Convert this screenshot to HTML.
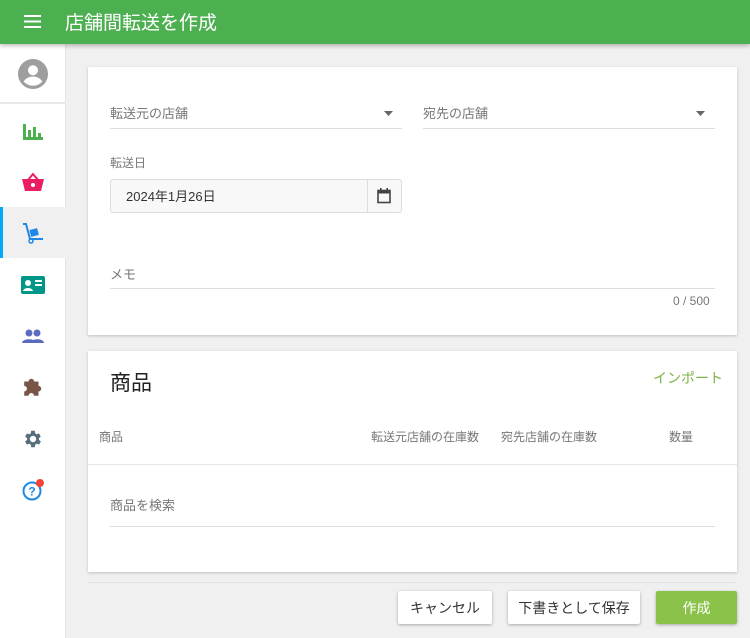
<!DOCTYPE html>
<html><head><meta charset="utf-8"><style>
*{box-sizing:border-box;margin:0;padding:0}
body{width:750px;height:638px;overflow:hidden;background:#f0f0f0;font-family:"Liberation Sans","Noto Sans CJK JP",sans-serif;position:relative;color:#333}
.hdr{position:absolute;left:0;top:0;width:750px;height:44px;background:#4caf50;box-shadow:0 2px 4px rgba(0,0,0,.25);z-index:3;color:#fff}
.hdr .t{position:absolute;left:65px;top:8px;font-size:19px}
.side{position:absolute;left:0;top:44px;width:66px;height:594px;background:#fff;border-right:1px solid #e4e4e4}
.ic{position:absolute;left:0;width:66px;height:51px;display:flex;align-items:center;justify-content:center}
.card{position:absolute;background:#fff;box-shadow:0 1px 3px rgba(0,0,0,.2)}
.lbl{position:absolute;font-size:13px;color:#777}
.line{position:absolute;height:1px;background:#ddd}
.btn{position:absolute;top:591px;height:33px;background:#fff;box-shadow:0 1px 3px rgba(0,0,0,.3);font-size:14px;display:flex;align-items:center;justify-content:center;border-radius:2px;color:#333}
</style></head><body>
<div class="hdr">
<svg style="position:absolute;left:24px;top:15px" width="17" height="13"><rect y="0" width="17" height="2" fill="#fff"/><rect y="5.5" width="17" height="2" fill="#fff"/><rect y="11" width="17" height="2" fill="#fff"/></svg>
<div class="t">店舗間転送を作成</div></div>
<div class="side">
<div class="ic" style="top:4px;height:51px"><svg width="30" height="30" viewBox="0 0 24 24"><circle cx="12" cy="12" r="12" fill="#9e9e9e"/><circle cx="12" cy="9" r="4" fill="#fff"/><path d="M4.5 18c2-3 5-4 7.5-4s5.5 1 7.5 4c-2 2.2-4.6 3.4-7.5 3.4S6.5 20.2 4.5 18z" fill="#fff"/></svg></div>
<div style="position:absolute;left:0;top:58px;width:66px;height:2px;background:#e8e8e8"></div>
<div class="ic" style="top:61px"><svg width="20" height="18"><rect x="0" y="2" width="3" height="16" fill="#4caf50"/><rect x="5" y="8" width="3" height="10" fill="#4caf50"/><rect x="10" y="5" width="3" height="13" fill="#4caf50"/><rect x="15" y="11" width="3" height="7" fill="#4caf50"/><rect x="0" y="15" width="20" height="3" fill="#4caf50"/></svg></div>
<div class="ic" style="top:112px"><svg width="22" height="20" viewBox="0 0 22 20"><path d="M6 8L11 2L16 8" stroke="#e91e63" stroke-width="2" fill="none"/><path d="M0 7h22l-3 12H3z" fill="#e91e63"/><circle cx="11" cy="13" r="2" fill="#fff"/></svg></div>
<div class="ic" style="top:163px;background:#f0f0f0"><div style="position:absolute;left:0;top:0;width:3px;height:51px;background:#03a9f4"></div><svg width="22" height="22" viewBox="0 0 22 22"><path d="M1 2h3l4 15h13" stroke="#1e88e5" stroke-width="2" fill="none"/><rect x="8" y="7" width="8" height="7" fill="#1e88e5" transform="rotate(-15 12 10)"/><circle cx="9" cy="19" r="2" fill="none" stroke="#1e88e5" stroke-width="1.5"/></svg></div>
<div class="ic" style="top:215px"><svg width="24" height="18"><rect width="24" height="18" rx="2" fill="#009688"/><circle cx="7" cy="7" r="3" fill="#fff"/><path d="M2 15c1-4 9-4 10 0z" fill="#fff"/><rect x="14" y="4" width="7" height="2" fill="#fff"/><rect x="14" y="8" width="7" height="2" fill="#fff"/></svg></div>
<div class="ic" style="top:266px"><svg width="22" height="14"><circle cx="7" cy="4" r="3.5" fill="#5c6bc0"/><circle cx="15" cy="4" r="3.5" fill="#5c6bc0"/><path d="M0 14c0-5 14-5 14 0z" fill="#5c6bc0"/><path d="M9 14c0-5 13-5 13 0z" fill="#5c6bc0"/></svg></div>
<div class="ic" style="top:317px"><svg width="22" height="22" viewBox="0 0 20 20"><path d="M2 5h4a2.5 2.5 0 1 1 5 0h4v4a2.5 2.5 0 1 1 0 5v4H11a2.5 2.5 0 1 0-5 0H2v-4a2.5 2.5 0 1 0 0-5z" fill="#795548"/></svg></div>
<div class="ic" style="top:369px"><svg width="22" height="22" viewBox="0 0 24 24"><path fill="#546e7a" d="M19.4 13a7.5 7.5 0 0 0 0-2l2.1-1.6-2-3.5-2.5 1a7 7 0 0 0-1.7-1L15 3h-4l-.4 2.9a7 7 0 0 0-1.7 1l-2.5-1-2 3.5L6.6 11a7.5 7.5 0 0 0 0 2l-2.2 1.6 2 3.5 2.5-1a7 7 0 0 0 1.7 1L11 21h4l.4-2.9a7 7 0 0 0 1.7-1l2.5 1 2-3.5zM13 15.5a3.5 3.5 0 1 1 0-7 3.5 3.5 0 0 1 0 7z" transform="translate(-1 0)"/></svg></div>
<div class="ic" style="top:420px"><svg width="24" height="24" viewBox="0 0 24 24"><circle cx="11" cy="13" r="8.5" fill="none" stroke="#1e88e5" stroke-width="2"/><text x="11" y="17.5" font-size="12" font-weight="bold" fill="#1e88e5" text-anchor="middle" font-family="Liberation Sans">?</text><circle cx="19" cy="5" r="4" fill="#f44336"/></svg></div>
</div>

<div class="card" style="left:88px;top:67px;width:649px;height:268px">
<div class="lbl" style="left:22px;top:36px">転送元の店舗</div>
<svg style="position:absolute;left:296px;top:44px" width="9" height="5"><path d="M0 0h9L4.5 5z" fill="#666"/></svg>
<div class="line" style="left:22px;top:61px;width:292px"></div>
<div class="lbl" style="left:335px;top:36px">宛先の店舗</div>
<svg style="position:absolute;left:608px;top:44px" width="9" height="5"><path d="M0 0h9L4.5 5z" fill="#666"/></svg>
<div class="line" style="left:335px;top:61px;width:292px"></div>
<div class="lbl" style="left:22px;top:87px;font-size:12px">転送日</div>
<div style="position:absolute;left:22px;top:112px;width:292px;height:34px;border:1px solid #ddd;border-radius:3px;background:#f8f8f8"></div>
<div style="position:absolute;left:279px;top:112px;width:1px;height:34px;background:#ddd"></div>
<div style="position:absolute;left:38px;top:119px;font-size:13px;color:#333">2024年1月26日</div>
<svg style="position:absolute;left:289px;top:121px" width="14" height="16" viewBox="0 0 14 16"><rect x="1" y="2.5" width="12" height="12" fill="none" stroke="#444" stroke-width="1.6"/><rect x="1" y="2.5" width="12" height="3" fill="#444"/><rect x="3" y="0" width="1.6" height="3" fill="#444"/><rect x="9.4" y="0" width="1.6" height="3" fill="#444"/></svg>
<div class="lbl" style="left:22px;top:197px">メモ</div>
<div class="line" style="left:22px;top:221px;width:605px"></div>
<div class="lbl" style="left:585px;top:227px;font-size:12px">0 / 500</div>
</div>

<div class="card" style="left:88px;top:351px;width:649px;height:221px">
<div style="position:absolute;left:22px;top:16px;font-size:21px;color:#222">商品</div>
<div style="position:absolute;left:565px;top:17px;font-size:14px;color:#7cb342">インポート</div>
<div class="lbl" style="left:11px;top:77px;font-size:12px">商品</div>
<div class="lbl" style="left:283px;top:77px;font-size:12px">転送元店舗の在庫数</div>
<div class="lbl" style="left:413px;top:77px;font-size:12px">宛先店舗の在庫数</div>
<div class="lbl" style="left:581px;top:77px;font-size:12px">数量</div>
<div class="line" style="left:0;top:113px;width:649px;background:#e6e6e6"></div>
<div class="lbl" style="left:22px;top:144px">商品を検索</div>
<div class="line" style="left:22px;top:175px;width:605px"></div>
</div>
<div style="position:absolute;left:88px;top:582px;width:649px;height:1px;background:#e4e4e4"></div>
<div class="btn" style="left:398px;width:94px">キャンセル</div>
<div class="btn" style="left:508px;width:132px">下書きとして保存</div>
<div class="btn" style="left:656px;width:81px;background:#8bc34a;color:#fff">作成</div>
</body></html>
